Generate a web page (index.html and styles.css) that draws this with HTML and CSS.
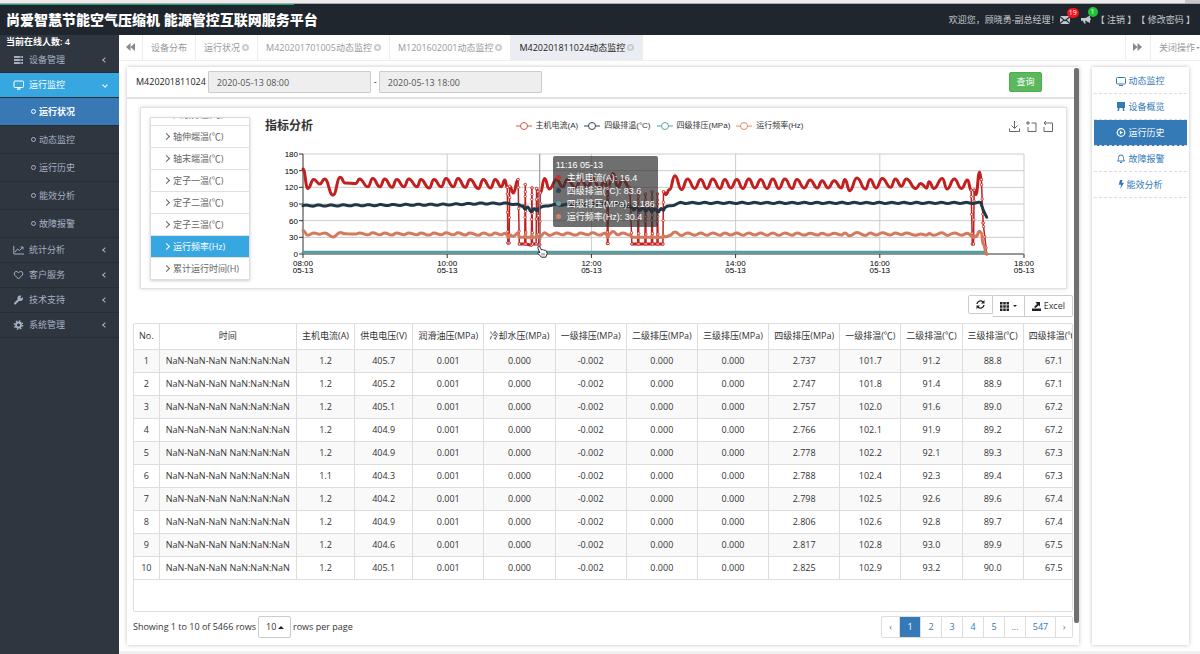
FILE: index.html
```
<!DOCTYPE html>
<html lang="zh-CN">
<head>
    <meta charset="UTF-8">
    <meta name="viewport" content="width=device-width, initial-scale=1.0">
    <title>尚爱智慧节能空气压缩机 能源管控互联网服务平台</title>
    <link rel="stylesheet" href="styles.css">
</head>
<body>
    <div class="top-strip"><span></span></div>
    <header class="header">
        <div class="progress"></div>
        <h1>尚爱智慧节能空气压缩机 能源管控互联网服务平台</h1>
        <div class="user-nav">
            <span class="welcome">欢迎您，顾晓勇-副总经理！</span>
            <a href="#" class="notice" aria-label="邮件">
                <svg width="10" height="8" viewBox="0 0 10 8"><path d="M0 0h10L5 4zM0 1.4L3.2 4 0 6.8zM10 1.4L6.8 4 10 6.8zM.4 8L4 4.7l1 .7 1-.7L9.600 8z" fill="#c3c8cd"/></svg>
                <span class="badge red">19</span>
            </a>
            <a href="#" class="notice last" aria-label="通知">
                <svg width="10" height="9" viewBox="0 0 10 9"><path d="M0 3h4.500L9 .5v7.500L4.500 5.800H4l.8 2.700H3L2 5.800H0zM9.300 3.200h.7v2h-.7z" fill="#c3c8cd"/></svg>
                <span class="badge green">1</span>
            </a>
            <a href="#" class="user-link">【 注销 】</a>
            <a href="#" class="user-link">【 修改密码 】</a>
        </div>
    </header>

    <div class="page">
        <!-- Left menu -->
        <nav class="sidebar">
            <p class="online">当前在线人数: 4</p>
            <a href="#" class="menu"><svg class="menu-icon" viewBox="0 0 11 10"><path d="M1 2h9M1 5h9M1 8h9" stroke="currentColor" stroke-width="2"/><path d="M6.500 2H9M6.500 5H9M6.500 8H9" stroke="#2f3640" stroke-width=".7"/></svg>设备管理<i class="arrow"></i></a>
            <a href="#" class="menu open"><svg class="menu-icon" viewBox="0 0 11 10"><rect x="1" y="1" width="9.500" height="6.500" rx="1" fill="none" stroke="currentColor"/><path d="M4 9h3.500" stroke="currentColor" stroke-width="1.400"/></svg>运行监控<i class="arrow down"></i></a>
            <a href="#" class="sub active"><i class="ring"></i>运行状况</a>
            <a href="#" class="sub"><i class="ring"></i>动态监控</a>
            <a href="#" class="sub"><i class="ring"></i>运行历史</a>
            <a href="#" class="sub"><i class="ring"></i>能效分析</a>
            <a href="#" class="sub"><i class="ring"></i>故障报警</a>
            <a href="#" class="menu"><svg class="menu-icon" viewBox="0 0 11 10"><path d="M.8 1v8H11M2 7l2.500-3 2 1.500L10 2M7.500 2H10v2.500" fill="none" stroke="currentColor"/></svg>统计分析<i class="arrow"></i></a>
            <a href="#" class="menu"><svg class="menu-icon" viewBox="0 0 11 10"><path d="M5.500 9L1.800 5.200C.5 3.600 1.500 1.500 3.200 1.500c1.100 0 1.800.6 2.300 1.500.5-.9 1.200-1.500 2.300-1.500 1.700 0 2.700 2.100 1.400 3.700z" fill="none" stroke="currentColor"/></svg>客户服务<i class="arrow"></i></a>
            <a href="#" class="menu"><svg class="menu-icon" viewBox="0 0 11 10"><path d="M2 8.500l4-4" stroke="currentColor" stroke-width="2" stroke-linecap="round"/><path d="M9.800 2.200L8.200 3.500 7.200 2.600 8.500.8A2.800 2.800 0 1 0 9.800 2.200z" fill="currentColor"/></svg>技术支持<i class="arrow"></i></a>
            <a href="#" class="menu"><svg class="menu-icon" viewBox="0 0 11 10"><circle cx="5.500" cy="5" r="2.500" fill="none" stroke="currentColor" stroke-width="1.800"/><circle cx="5.500" cy="5" r="4" fill="none" stroke="currentColor" stroke-width="1.600" stroke-dasharray="1.500 1.640"/></svg>系统管理<i class="arrow"></i></a>
        </nav>

        <div class="content">
            <!-- Open tabs -->
            <div class="tabs">
                <button class="tab-roll" aria-label="前一页"><svg width="9" height="8" viewBox="0 0 9 8"><path d="M4.500 0v8L0 4zM9 0v8L4.500 4z" fill="#888"/></svg></button>
                <a href="#" class="tab">设备分布</a>
                <a href="#" class="tab">运行状况<i class="close"></i></a>
                <a href="#" class="tab">M420201701005动态监控<i class="close"></i></a>
                <a href="#" class="tab">M1201602001动态监控<i class="close"></i></a>
                <a href="#" class="tab current">M420201811024动态监控<i class="close"></i></a>
                <span class="spacer"></span>
                <button class="tab-roll right" aria-label="后一页"><svg width="9" height="8" viewBox="0 0 9 8"><path d="M0 0v8l4.500-4zM4.500 0v8L9 4z" fill="#888"/></svg></button>
                <button class="tab-close">关闭操作<i class="caret"></i></button>
            </div>

            <div class="workspace">
                <main class="panel">
                    <form class="query">
                        <label for="from">M420201811024</label>
                        <input type="text" id="from" value="2020-05-13 08:00" readonly>
                        <span class="dash">-</span>
                        <input type="text" id="to" aria-label="结束时间" value="2020-05-13 18:00" readonly>
                        <button type="button" class="btn-query">查询</button>
                    </form>

                    <div class="panel-body">
                        <section class="chart-card">
                            <div class="metrics">
                                <a href="#">四级排温(℃)</a>
                                <a href="#">轴伸端温(℃)</a>
                                <a href="#">轴末端温(℃)</a>
                                <a href="#">定子一温(℃)</a>
                                <a href="#">定子二温(℃)</a>
                                <a href="#">定子三温(℃)</a>
                                <a href="#" class="active">运行频率(Hz)</a>
                                <a href="#">累计运行时间(H)</a>
                            </div>
                            <div class="chart">
                                <div class="chart-head">
                                    <h2>指标分析</h2>
                                    <div class="legend" id="legend"></div>
                                    <div class="toolbox">
                                        <svg viewBox="0 0 11 11"><path d="M5.500 0v7M2.500 4.500l3 3 3-3M.5 7.500v3h10v-3"/></svg>
                                        <svg viewBox="0 0 11 11"><path d="M2 0v4M0 2h4M5.500 2h4.500v8.500H2V6"/></svg>
                                        <svg viewBox="0 0 11 11"><path d="M3 0L1 2l2 2M1 2h8.500v8.500H1V6"/></svg>
                                    </div>
                                </div>
                                <svg id="plot" class="plot"></svg>
                                <div class="tooltip" id="tooltip">
                                    <div>11:16 05-13</div>
                                    <div><i class="dot current-dot"></i>主机电流(A): 16.4</div>
                                    <div><i class="dot temp-dot"></i>四级排温(°C): 83.6</div>
                                    <div><i class="dot press-dot"></i>四级排压(MPa): 3.186</div>
                                    <div><i class="dot freq-dot"></i>运行频率(Hz): 30.4</div>
                                </div>
                                <svg class="hand" id="hand" viewBox="0 0 11 12"><path d="M1.200.8C2 .2 2.800.7 3.200 1.500L4.500 4c.5-.6 1.300-.5 1.700.1.6-.5 1.300-.3 1.600.4.8-.3 1.600.1 1.800 1l.6 2-1.400 3.700H4.500L1.300 7.800C.5 7 1.300 6 2.300 6.500l.6.300L.9 2.300C.6 1.700.8 1.100 1.200.8z" fill="#fff" stroke="#111" stroke-width=".9"/><path d="M5 7v2.500M7 7v2.500" stroke="#111" stroke-width=".6"/></svg>
                            </div>
                        </section>

                        <div class="table-tools">
                            <button class="short" aria-label="刷新"><svg width="9" height="9" viewBox="0 0 9 9"><path d="M1 4a3.500 3.500 0 0 1 6-2M8 5a3.500 3.500 0 0 1-6 2" fill="none" stroke="#222" stroke-width="1.400"/><path d="M8.500 0v3.500H5zM.5 9V5.500H4z" fill="#222"/></svg></button>
                            <button aria-label="列"><svg width="9" height="9" viewBox="0 0 9 9"><path d="M0 1.250h2.500m.75 0h2.500m.75 0H9M0 4.500h2.500m.75 0h2.500m.75 0H9M0 7.750h2.500m.75 0h2.500m.75 0H9" stroke="#222" stroke-width="2.400"/></svg><i class="caret dark"></i></button>
                            <button><svg width="9" height="9" viewBox="0 0 9 9"><path d="M0 6.500h9V9H0zM3.500 0H8v4.500L6.700 3.200 3.500 6 2 5l3-3z" fill="#222"/></svg>Excel</button>
                        </div>

                        <div class="table-box">
                            <table>
                                <colgroup>
                                    <col class="c-no"><col class="c-time"><col class="c-amp"><col class="c-amp">
                                    <col class="c-mpa"><col class="c-mpa"><col class="c-mpa"><col class="c-mpa"><col class="c-mpa"><col class="c-mpa">
                                    <col class="c-temp"><col class="c-temp"><col class="c-temp"><col class="c-temp">
                                </colgroup>
                                <thead>
                                    <tr>
                                        <th>No.</th><th>时间</th><th>主机电流(A)</th><th>供电电压(V)</th><th>润滑油压(MPa)</th><th>冷却水压(MPa)</th><th>一级排压(MPa)</th><th>二级排压(MPa)</th><th>三级排压(MPa)</th><th>四级排压(MPa)</th><th>一级排温(℃)</th><th>二级排温(℃)</th><th>三级排温(℃)</th><th>四级排温(℃)</th>
                                    </tr>
                                </thead>
                                <tbody id="rows"></tbody>
                            </table>
                        </div>

                        <div class="table-foot">
                            <span>Showing 1 to 10 of 5466 rows</span>
                            <span class="page-size"><select id="size"><option>10</option><option>25</option><option>50</option></select></span>
                            <label for="size">rows per page</label>
                            <nav class="pages">
                                <a href="#">‹</a><a href="#" class="on">1</a><a href="#">2</a><a href="#">3</a><a href="#">4</a><a href="#">5</a><span>...</span><a href="#" class="wide">547</a><a href="#">›</a>
                            </nav>
                        </div>
                    </div>
                    <div class="scrollbar"></div>
                </main>

                <!-- Right menu -->
                <aside class="side">
                    <a href="#"><svg viewBox="0 0 10 9"><rect x=".5" y=".5" width="9" height="6.500" rx="1" fill="none" stroke="currentColor"/><path d="M3 8.500h4" stroke="currentColor"/></svg>动态监控</a>
                    <a href="#"><svg viewBox="0 0 10 9"><path d="M1 0h8v6H1zM2 6h1.500L3 9H1.500zM6.500 6H8l.5 3H7z" fill="currentColor"/></svg>设备概览</a>
                    <a href="#" class="active"><svg viewBox="0 0 10 9"><circle cx="5" cy="4.500" r="3.800" fill="none" stroke="currentColor" stroke-width="1.200"/><path d="M3.800 2.500L7 4.500l-3.200 2z" fill="currentColor"/></svg>运行历史</a>
                    <a href="#"><svg viewBox="0 0 10 9"><path d="M1.500 7c1-1 1-2 1-3.500a2.500 2.500 0 0 1 5 0C7.500 5 7.500 6 8.500 7zM4 8.400h2" fill="none" stroke="currentColor"/></svg>故障报警</a>
                    <a href="#"><svg class="bolt" viewBox="0 0 6 9"><path d="M2 0h2.500l-.8 2.800H6L2.200 9l.9-4.200H.8z" fill="currentColor"/></svg>能效分析</a>
                </aside>
            </div>
            <footer class="footer"></footer>
        </div>
    </div>

    <script src="app.js"></script>
</body>
</html>
```
FILE: styles.css
```
* {
    box-sizing: border-box;
}

body {
    margin: 0;
    min-height: 100vh;
    display: flex;
    flex-direction: column;
    font-family: "Open Sans", "Noto Sans CJK SC", sans-serif;
    font-size: 9px;
    line-height: 12px;
    color: #333;
    background-color: #fff;
}

a {
    color: inherit;
    text-decoration: none;
}

button, input, select {
    font: inherit;
    color: inherit;
    margin: 0;
    padding: 0;
    border: 0;
    background: none;
}

button {
    cursor: pointer;
}

.top-strip {
    height: 4px;
    background-color: #ececec;
    border-bottom: 1px solid #aaa;
}

.top-strip span {
    display: block;
    width: 15px;
    height: 3px;
    margin-left: auto;
    background-color: #c8c8c8;
}

/* Header */
.header {
    position: relative;
    display: flex;
    align-items: center;
    justify-content: space-between;
    height: 31px;
    padding: 0 5px 0 6px;
    background-color: #1f262d;
}

.progress {
    position: absolute;
    top: 0;
    left: 0;
    width: 294px;
    height: 1px;
    background-color: #17a57c;
}

h1 {
    margin: 0;
    font-size: 14px;
    line-height: 20px;
    font-weight: 900;
    color: #fff;
}

.user-nav {
    display: flex;
    align-items: center;
    color: #c3c8cd;
}

.notice {
    position: relative;
    display: flex;
    margin-right: 11px;
}

.notice.last {
    margin-right: 5px;
}

.badge {
    position: absolute;
    left: 7px;
    top: -8px;
    min-width: 10px;
    height: 10px;
    padding: 0 2px;
    border-radius: 5px;
    font-size: 7px;
    line-height: 10px;
    text-align: center;
    color: #fff;
}

.badge.red {
    background-color: #f3131b;
}

.badge.green {
    background-color: #22c236;
}

.page {
    flex: 1;
    display: flex;
}

/* Left menu */
.sidebar {
    width: 119px;
    flex: none;
    background-color: #2f3640;
    color: #a7b1c2;
}

.online {
    margin: 0;
    padding-left: 6px;
    line-height: 13px;
    font-weight: 600;
    color: #fff;
}

.menu {
    display: flex;
    align-items: center;
    height: 25px;
    padding: 0 12px 0 13px;
    border-bottom: 1px solid #272d35;
}

.menu.open {
    background-color: #36a7e0;
    color: #fff;
}

.menu-icon {
    width: 11px;
    height: 10px;
    margin-right: 5px;
}

.arrow {
    width: 4px;
    height: 4px;
    margin-left: auto;
    border-left: 1px solid;
    border-bottom: 1px solid;
    transform: rotate(45deg);
}

.arrow.down {
    transform: rotate(-45deg);
}

.sub {
    display: flex;
    align-items: center;
    height: 28px;
    padding-left: 31px;
    border-bottom: 1px solid #272d35;
}

.sub.active {
    background-color: #3878b5;
    color: #fff;
    font-weight: 600;
}

.ring {
    width: 5px;
    height: 5px;
    margin-right: 3px;
    border: 1px solid;
    border-radius: 50%;
}

.content {
    flex: 1;
    min-width: 0;
    display: flex;
    flex-direction: column;
}

/* Tabs */
.tabs {
    display: flex;
    height: 26px;
    border-bottom: 1px solid #eee;
    color: #999;
}

.tab-roll {
    width: 24px;
    border-right: 1px solid #eee;
}

.tab-roll.right {
    width: 26px;
    border-left: 1px solid #eee;
}

.tab {
    display: flex;
    align-items: center;
    padding: 0 8px;
    border-right: 1px solid #eee;
    white-space: nowrap;
}

.tab.current {
    background-color: #eaedf2;
    color: #222;
}

.close {
    width: 7px;
    height: 7px;
    margin-left: 2px;
    border: 2px solid #ccc;
    border-radius: 50%;
}

.spacer {
    flex: 1;
}

.tab-close {
    display: flex;
    align-items: center;
    padding-left: 8px;
}

.caret {
    margin-left: 1px;
    border: 2px solid transparent;
    border-top-color: currentColor;
    border-bottom: 0;
}

.caret.dark {
    margin-left: 4px;
    color: #222;
}

.workspace {
    flex: 1;
    display: flex;
    gap: 13px;
    padding: 6px 11px 6px 8px;
}

.panel, .side {
    background-color: #fff;
    box-shadow: 0 0 4px rgba(0, 0, 0, 0.25);
}

.panel {
    position: relative;
    flex: 1;
    min-width: 0;
}

.query {
    display: flex;
    align-items: center;
    height: 32px;
    padding: 0 37px 0 9px;
    border-bottom: 2px solid #e0e3e7;
    color: #222;
}

.query input {
    width: 163px;
    height: 22px;
    margin-left: 2px;
    padding: 0 8px;
    border: 1px solid #ccc;
    border-radius: 1px;
    background-color: #eee;
    color: #555;
}

.dash {
    margin-left: 3px;
}

.btn-query {
    width: 33px;
    height: 20px;
    margin-left: auto;
    border: 1px solid #4cae4c;
    border-radius: 2px;
    background-color: #5cb85c;
    color: #fff;
}

.panel-body {
    padding: 8px 6px 7px;
}

/* Chart card */
.chart-card {
    display: flex;
    height: 182px;
    margin: 0 6px 0 7px;
    padding: 9px 0 0 9px;
    border: 1px solid #e2e2e2;
    box-shadow: 0 0 4px rgba(0, 0, 0, 0.15);
}

.metrics {
    display: flex;
    flex-direction: column;
    justify-content: flex-end;
    width: 100px;
    height: 163px;
    flex: none;
    overflow: hidden;
    border: 1px solid #ddd;
    box-shadow: 0 1px 3px rgba(0, 0, 0, 0.2);
    color: #666;
}

.metrics a {
    display: flex;
    flex: none;
    align-items: center;
    height: 22px;
    padding-left: 13px;
    border-top: 1px solid #e0e0e0;
    white-space: nowrap;
}

.metrics a::before {
    content: "";
    width: 4px;
    height: 4px;
    margin-right: 4px;
    border-top: 1px solid;
    border-right: 1px solid;
    transform: rotate(45deg);
}

.metrics .active {
    background-color: #36a7e0;
    color: #fff;
}

.chart {
    position: relative;
    flex: 1;
    min-width: 0;
    font-family: "Liberation Sans", "Noto Sans CJK SC", sans-serif;
}

.chart-head {
    display: grid;
    grid-template-columns: 1fr auto 1fr;
    align-items: center;
    height: 18px;
    padding: 0 12px 0 15px;
}

h2 {
    margin: 0;
    font-size: 12px;
    line-height: 16px;
    color: #333;
}

.legend {
    display: flex;
    gap: 6px;
    font-size: 8px;
}

.legend span {
    display: flex;
    align-items: center;
    gap: 4px;
}

.legend svg {
    width: 16px;
    height: 10px;
}

.toolbox {
    display: flex;
    justify-content: flex-end;
    gap: 6px;
}

.toolbox svg {
    width: 11px;
    height: 11px;
    fill: none;
    stroke: #666;
}

.plot {
    display: block;
    width: 100%;
    height: 144px;
    margin-top: 9px;
    font-size: 8px;
}

.tooltip {
    position: absolute;
    top: 39px;
    padding: 3px;
    border-radius: 2px;
    background-color: rgba(50, 50, 50, 0.7);
    color: #fff;
    line-height: 13px;
    white-space: nowrap;
}

.dot {
    display: inline-block;
    width: 5px;
    height: 5px;
    margin-right: 6px;
    border-radius: 50%;
    vertical-align: 1px;
}

.current-dot {
    background-color: #c23531;
}

.temp-dot {
    background-color: #2f4554;
}

.press-dot {
    background-color: #61a0a8;
}

.freq-dot {
    background-color: #d48265;
}

.hand {
    position: absolute;
    top: 129px;
    width: 11px;
    height: 12px;
}

/* Table */
.table-tools {
    display: flex;
    align-items: flex-start;
    justify-content: flex-end;
    margin: 6px 0;
}

.table-tools button {
    display: flex;
    align-items: center;
    justify-content: center;
    height: 22px;
    padding: 0 7px;
    border: 1px solid #ccc;
    border-left-width: 0;
}

.table-tools .short {
    height: 19px;
    border-left-width: 1px;
    border-radius: 2px 0 0 2px;
}

.table-tools button:last-child {
    gap: 3px;
    border-radius: 0 2px 2px 0;
}

.table-box {
    height: 289px;
    overflow: hidden;
    border: 1px solid #ddd;
    border-radius: 2px;
}

table {
    width: 100%;
    min-width: 951px;
    table-layout: fixed;
    border-collapse: collapse;
}

.c-no {
    width: 25px;
}

.c-time {
    width: 137px;
}

.c-amp {
    width: 58px;
}

.c-mpa {
    width: 71px;
}

.c-temp {
    width: 61px;
}

th, td {
    height: 23px;
    padding: 0;
    border-right: 1px solid #ddd;
    border-bottom: 1px solid #ddd;
    font-weight: 400;
    text-align: center;
    white-space: nowrap;
}

th {
    height: 25px;
}

tbody tr:nth-child(odd) {
    background-color: #f9f9f9;
}

.table-foot {
    display: flex;
    align-items: center;
    gap: 2px;
    margin-top: 4px;
}

.page-size {
    position: relative;
}

.page-size::after {
    content: "";
    position: absolute;
    right: 7px;
    top: 10px;
    border: 3px solid transparent;
    border-bottom-color: #222;
    border-top: 0;
}

.page-size select {
    width: 33px;
    height: 22px;
    padding-left: 7px;
    border: 1px solid #ccc;
    border-radius: 2px;
    appearance: none;
}

.pages {
    display: flex;
    height: 22px;
    margin-left: auto;
    border: 1px solid #ddd;
    border-radius: 2px;
    color: #337ab7;
    line-height: 20px;
    text-align: center;
}

.pages > * {
    min-width: 21px;
    border-left: 1px solid #ddd;
}

.pages > :first-child, .pages > :last-child {
    min-width: 17px;
}

.pages > :first-child {
    border-left: 0;
}

.pages > span {
    color: #777;
}

.pages .wide {
    width: 30px;
}

.pages .on {
    background-color: #337ab7;
    color: #fff;
}

.scrollbar {
    position: absolute;
    top: 1px;
    right: 0;
    bottom: 22px;
    width: 5px;
    border-radius: 2px;
    background-color: #707070;
}

/* Right menu */
.side {
    width: 97px;
    flex: none;
    padding: 2px;
    color: #337ab7;
}

.side a {
    display: flex;
    align-items: center;
    justify-content: center;
    gap: 2px;
    height: 26px;
    border-bottom: 1px dashed #ddd;
}

.side a:first-child {
    height: 25px;
}

.side svg {
    width: 10px;
    height: 9px;
}

.side .bolt {
    width: 6px;
}

.side .active {
    background-color: #337ab7;
    color: #fff;
}

.footer {
    height: 3px;
    background-color: #f0f0f0;
}
```
FILE: app.js
```
const SAMPLES = [
    ['1.2', '405.7', '2.737', '101.7', '91.2', '88.8', '67.1'],
    ['1.2', '405.2', '2.747', '101.8', '91.4', '88.9', '67.1'],
    ['1.2', '405.1', '2.757', '102.0', '91.6', '89.0', '67.2'],
    ['1.2', '404.9', '2.766', '102.1', '91.9', '89.2', '67.2'],
    ['1.2', '404.9', '2.778', '102.2', '92.1', '89.3', '67.3'],
    ['1.1', '404.3', '2.788', '102.4', '92.3', '89.4', '67.3'],
    ['1.2', '404.2', '2.798', '102.5', '92.6', '89.6', '67.4'],
    ['1.2', '404.9', '2.806', '102.6', '92.8', '89.7', '67.4'],
    ['1.2', '404.6', '2.817', '102.8', '93.0', '89.9', '67.5'],
    ['1.2', '405.1', '2.825', '102.9', '93.2', '90.0', '67.5']
];

document.getElementById('rows').innerHTML = SAMPLES.map((s, i) => {
    const cells = [i + 1, 'NaN-NaN-NaN NaN:NaN:NaN', s[0], s[1], '0.001', '0.000', '-0.002', '0.000', '0.000', ...s.slice(2)];
    return '<tr>' + cells.map(c => `<td>${c}</td>`).join('') + '</tr>';
}).join('');

const RED = '#c21f1f', NAVY = '#1f3747', TEAL = '#559ca5', ORANGE = '#d4795c';

document.getElementById('legend').innerHTML = [
    ['主机电流(A)', '#d9534f'], ['四级排温(°C)', '#2f4554'], ['四级排压(MPa)', '#61a0a8'], ['运行频率(Hz)', '#e08c70']
].map(([name, color]) =>
    `<span><svg viewBox="0 0 16 10"><path d="M0 5h16" stroke="${color}"/><circle cx="8" cy="5" r="3.500" fill="#fff" stroke="${color}"/></svg>${name}</span>`
).join('');

// Highs and lows of the current: [minutes after 08:00, A]
const CURRENT = [
    [0, 153], [4, 118], [9, 134], [14, 126], [18, 135], [25, 106], [31, 138], [35, 128], [44, 127], [47, 135],
    [54, 121], [58, 136], [64, 121], [68, 135], [74, 120], [78, 134], [84, 121], [88, 135], [95, 121], [98, 134],
    [105, 119], [109, 134], [115, 121], [119, 136], [125, 121], [129, 136], [135, 120], [139, 134], [146, 118],
    [150, 134], [156, 119], [160, 134], [165, 121], [168, 133], [170, 120], [170.5, 20], [171.5, 20], [172, 122],
    [175, 110], [179, 134], [180, 18], [184.5, 18], [185, 125], [185.5, 18], [190, 16], [190.5, 119], [191, 18],
    [194, 18], [194.4, 118], [195.5, 112], [196.2, 16.4], [197, 16.4], [197.5, 110], [201, 136], [205, 117], [211, 134],
    [216, 121], [220, 134], [227, 119], [231, 134], [237, 121], [241, 136], [247, 119], [251, 132], [253, 120],
    [253.3, 19], [253.8, 19], [254.2, 122], [258, 145], [262, 121], [266, 134], [272, 119], [273.700, 18], [278.500, 18],
    [279, 115], [279.5, 18], [284.5, 18], [285, 108], [285.5, 18], [290, 18], [290.5, 112], [291, 18], [294.6, 18],
    [295, 108], [295.5, 18], [299.5, 18], [300, 112], [302, 107], [305, 116], [309.5, 141], [315, 116], [320, 135],
    [326, 118], [331, 134], [336, 118], [341, 135], [347, 118], [351, 134], [356, 119], [361, 134], [366, 118],
    [371, 135], [376, 119], [381, 134], [386, 118], [391, 135], [396, 118], [401, 135], [407, 118], [411, 134],
    [417, 119], [422, 133], [428, 119], [432, 132], [437, 119], [442, 132], [448, 119], [451, 134], [455, 114],
    [461, 137], [468, 117], [472, 134], [477, 119], [482, 136], [489, 120], [493, 135], [498, 122], [502, 135],
    [510, 118], [514, 127], [519, 119], [521, 130], [525, 118], [532, 136], [536, 117], [542, 135], [548, 118],
    [553, 133], [556, 115], [557, 18], [558, 18], [558.5, 115], [560, 107], [563, 147], [564.5, 134], [566, 56], [569, 0]
];

// Same beat as the current, but the compressor holds 30 Hz while unloaded
const FREQUENCY = CURRENT.map(([t, v]) => [t, t > 564.5 ? (569 - t) * 6 : v < 100 ? 30 : 36 + (v - 127) * 0.25]);

const TEMP_BASE = [[0, 87], [120, 89], [150, 91], [172, 91], [180, 88], [191, 78], [197, 83], [205, 88], [262, 91],
    [275, 82], [297, 78], [303, 85], [314, 92], [564, 92], [566, 80], [569, 67]];

function baseAt(t) {
    const i = TEMP_BASE.findIndex(p => p[0] >= t);
    if (i < 1) return TEMP_BASE[0][1];
    const [t0, v0] = TEMP_BASE[i - 1], [t1, v1] = TEMP_BASE[i];
    return v0 + (v1 - v0) * (t - t0) / (t1 - t0);
}

const TEMPERATURE = [];
for (let t = 0; t <= 569; t++) {
    const idle = (t > 182 && t < 197) || (t > 274 && t < 301);
    TEMPERATURE.push([t, baseAt(t) + Math.sin(t / (idle ? 0.8 : 1.65)) * (idle ? 3 : 1)]);
}

function drawChart() {
    const plot = document.getElementById('plot');
    const left = 53, right = plot.clientWidth - 42, top = 10, bottom = 110;
    const x = t => left + (right - left) * t / 600;
    const y = v => bottom - (bottom - top) * v / 180;
    let out = '';

    for (let v = 0; v <= 180; v += 30) {
        out += `<path d="M${left} ${y(v)}H${right}" stroke="${v ? '#ccc' : '#333'}"/>`;
        out += `<path d="M${left - 4} ${y(v)}h4" stroke="#333"/>`;
        out += `<text x="${left - 5}" y="${y(v) + 3}" text-anchor="end">${v}</text>`;
    }
    for (let h = 0; h <= 10; h += 2) {
        out += `<path d="M${x(h * 60)} ${top}V${bottom}" stroke="${h ? '#ccc' : '#333'}"/>`;
        out += `<path d="M${x(h * 60)} ${bottom}v4" stroke="#333"/>`;
        out += `<text x="${x(h * 60)}" y="122" text-anchor="middle">${String(h + 8).padStart(2, '0')}:00</text>`;
        out += `<text x="${x(h * 60)}" y="129" text-anchor="middle">05-13</text>`;
    }

    // Dense samples make a thick line; fast changes leave single markers
    function series(points, color) {
        let thick = '', thin = '', marks = '';
        for (let i = 1; i < points.length; i++) {
            const [t0, v0] = points[i - 1], [t1, v1] = points[i];
            const mid = x((t0 + t1) / 2);
            if (Math.abs(v1 - v0) > 40) {
                thin += `M${x(t0)} ${y(v0)}L${x(t1)} ${y(v1)}`;
                [0, 0.12, 0.45, 0.8, 1].forEach(k => {
                    marks += `<circle cx="${x(t0 + (t1 - t0) * k)}" cy="${y(v0 + (v1 - v0) * k)}" r="1.200"/>`;
                });
            } else {
                thick += `M${x(t0)} ${y(v0)}C${mid} ${y(v0)} ${mid} ${y(v1)} ${x(t1)} ${y(v1)}`;
            }
        }
        out += `<path d="${thick}" fill="none" stroke="${color}" stroke-width="3" stroke-linecap="round"/>`;
        out += `<path d="${thin}" fill="none" stroke="${color}" stroke-width="1.500"/>`;
        out += `<g fill="#fff" stroke="${color}" stroke-width=".8">${marks}</g>`;
    }

    series(CURRENT, RED);
    series(TEMPERATURE, NAVY);
    series([[0, 3.2], [568, 3.2]], TEAL);
    series(FREQUENCY, ORANGE);

    out += `<path d="M${x(197)} ${top}V${bottom}" stroke="#888"/>`;
    plot.innerHTML = out;
    document.getElementById('tooltip').style.left = x(197) + 13 + 'px';
    document.getElementById('hand').style.left = x(197) - 3 + 'px';
}

drawChart();
window.addEventListener('resize', drawChart);
```
